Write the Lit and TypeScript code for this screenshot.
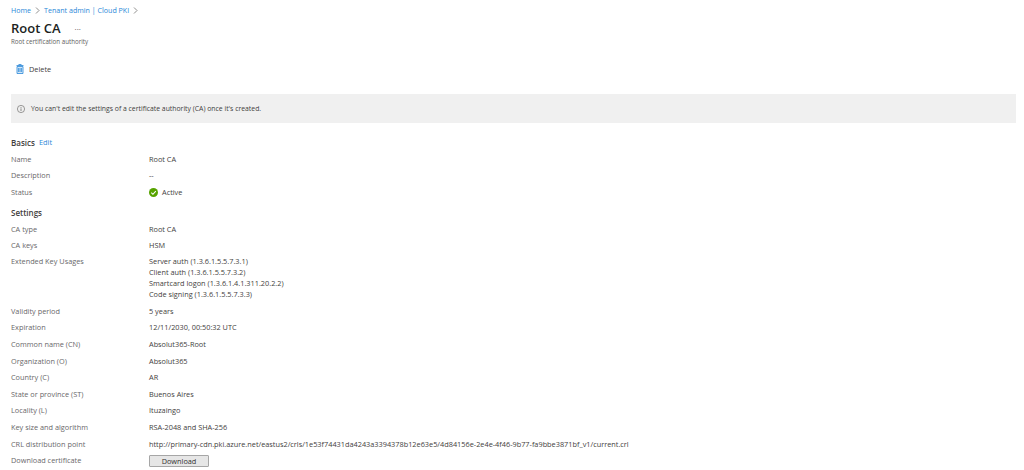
import { LitElement, html, css } from "lit";
import { customElement } from "lit/decorators.js";

const basics: [string, string][] = [["Name", "Root CA"], ["Description", "--"]];
const settingsTop: [string, string][] = [["CA type", "Root CA"], ["CA keys", "HSM"]];
const usages = [
  "Server auth (1.3.6.1.5.5.7.3.1)",
  "Client auth (1.3.6.1.5.5.7.3.2)",
  "Smartcard logon (1.3.6.1.4.1.311.20.2.2)",
  "Code signing (1.3.6.1.5.5.7.3.3)",
];
const settingsBottom: [string, string][] = [
  ["Validity period", "5 years"],
  ["Expiration", "12/11/2030, 00:50:32 UTC"],
  ["Common name (CN)", "Absolut365-Root"],
  ["Organization (O)", "Absolut365"],
  ["Country (C)", "AR"],
  ["State or province (ST)", "Buenos Aires"],
  ["Locality (L)", "Ituzaingo"],
  ["Key size and algorithm", "RSA-2048 and SHA-256"],
  ["CRL distribution point", "http://primary-cdn.pki.azure.net/eastus2/crls/1e53f74431da4243a3394378b12e63e5/4d84156e-2e4e-4f46-9b77-fa9bbe3871bf_v1/current.crl"],
];

@customElement("app-root")
export class AppRoot extends LitElement {
  static styles = css`
    :host {
      display: block;
      width: 1024px;
      height: 470px;
      overflow: hidden;
      background: #fff;
      color: #3f3e3d;
      font-family: "Open Sans", "Noto Sans", sans-serif;
      font-size: 7.33px;
      line-height: 11px;
      box-sizing: border-box;
      padding: 3px 8px 0 11px;
    }
    a { color: #2b88d8; text-decoration: none; }
    .crumbs { display: flex; align-items: center; gap: 4px; height: 14px; font-size: 7.1px; }
    .chev { width: 5px; height: 7px; flex: none; }
    .title { display: flex; align-items: baseline; gap: 14px; height: 20px; margin-top: 1px; }
    h1 { margin: 0; font-size: 13px; line-height: 20px; font-weight: 600; color: #201f1e; }
    .more { color: #605e5c; font-size: 8px; position: relative; top: -3px; }
    .sub { font-size: 6.2px; line-height: 8px; color: #605e5c; }
    .toolbar { display: flex; align-items: center; gap: 5px; height: 14px; margin: 16px 0 0 5px; }
    .banner {
      display: flex; align-items: center; gap: 6px;
      height: 29px; margin-top: 18px; padding-left: 6px;
      background: #f0f0f0; font-size: 6.85px;
    }
    .section { display: flex; gap: 4px; font-weight: 600; height: 16.5px; align-items: center; font-size: 8px; }
    .section a { font-weight: 400; font-size: 7.4px; }
    .basics { margin-top: 11.5px; }
    .settings { margin-top: 3.5px; }
    .row { display: grid; grid-template-columns: 138px 1fr; min-height: 16.6px; align-items: center; }
    .row.top { align-items: start; padding-top: 2.5px; padding-bottom: 2.6px; box-sizing: border-box; }
    .label { color: #69676a; }
    .value { white-space: nowrap; }
    .status { display: flex; align-items: center; gap: 4px; }
    button {
      display: block; width: 60px; height: 12px; padding: 0; font: inherit; line-height: 10px;
      color: #323130; background: #e6e6e6; border: 1px solid #a6a6a6; border-radius: 1px;
    }
  `;

  private row(r: [string, string]) {
    return html`<div class="row"><span class="label">${r[0]}</span><span class="value">${r[1]}</span></div>`;
  }

  private chev() {
    return html`<svg class="chev" viewBox="0 0 5 7"><path d="M1 .5 4 3.5 1 6.5" fill="none" stroke="#605e5c" stroke-width=".7"/></svg>`;
  }

  render() {
    return html`
      <nav class="crumbs"><a>Home</a>${this.chev()}<a>Tenant admin | Cloud PKI</a>${this.chev()}</nav>
      <div class="title"><h1>Root CA</h1><span class="more">...</span></div>
      <div class="sub">Root certification authority</div>
      <div class="toolbar">
        <svg width="8" height="10" viewBox="0 0 8 10"><path d="M1 2.5h6V9.5H1z" fill="#d4e8f8"/><path d="M1 2.5h6V9.5H1zM.5 1.5h7M2.8 1.5V.5h2.4v1M2.6 4v4M4 4v4M5.4 4v4" fill="none" stroke="#2b88d8" stroke-width=".8"/></svg>
        <span>Delete</span>
      </div>
      <div class="banner">
        <svg width="8" height="8" viewBox="0 0 8 8"><circle cx="4" cy="4" r="3.6" fill="none" stroke="#605e5c" stroke-width=".6"/><path d="M4 3.4v2.6M4 2v.8" stroke="#605e5c" stroke-width=".7"/></svg>
        <span>You can't edit the settings of a certificate authority (CA) once it's created.</span>
      </div>
      <div class="section basics"><span>Basics</span><a>Edit</a></div>
      ${basics.map((r) => this.row(r))}
      <div class="row"><span class="label">Status</span><span class="value status">
        <svg width="9" height="9" viewBox="0 0 9 9"><circle cx="4.5" cy="4.5" r="4.5" fill="#57a300"/><path d="M2.3 4.7 3.9 6.3 6.8 3.1" fill="none" stroke="#fff" stroke-width="1.1"/></svg>
        Active</span></div>
      <div class="section settings"><span>Settings</span></div>
      ${settingsTop.map((r) => this.row(r))}
      <div class="row top"><span class="label">Extended Key Usages</span><div class="value">${usages.map((u) => html`<div>${u}</div>`)}</div></div>
      ${settingsBottom.map((r) => this.row(r))}
      <div class="row"><span class="label">Download certificate</span><span><button>Download</button></span></div>
    `;
  }
}
